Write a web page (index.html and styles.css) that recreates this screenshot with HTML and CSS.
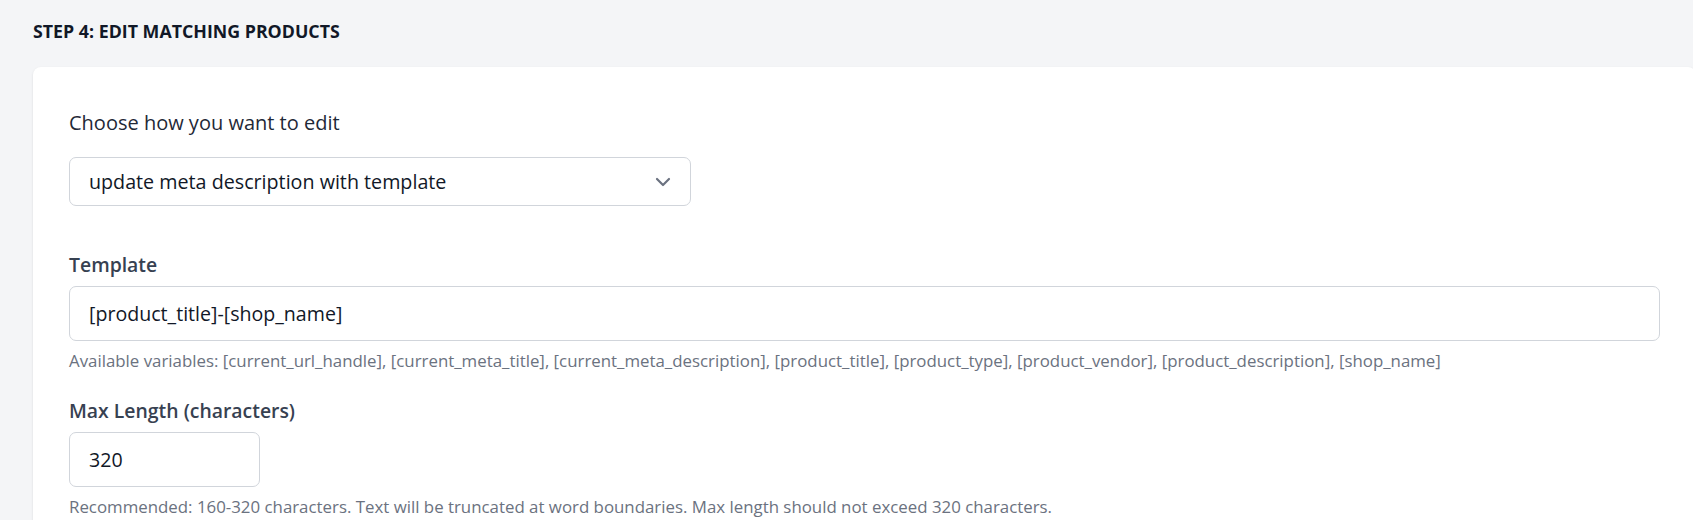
FILE: index.html
```html
<!DOCTYPE html>
<html lang="en">
<head>
  <meta charset="UTF-8">
  <meta name="viewport" content="width=device-width, initial-scale=1.0">
  <title>Edit matching products</title>
  <link rel="stylesheet" href="styles.css">
</head>
<body>

  <div class="page">
    <h2 class="step-title">Step 4: Edit matching products</h2>

    <div class="card">
      <p class="edit-label">Choose how you want to edit</p>

      <div class="select-wrap">
        <select class="select-input">
          <option>update meta description with template</option>
        </select>
        <svg class="select-arrow" width="16" height="10" viewBox="0 0 16 10" fill="none">
          <path d="M2 2l6 6 6-6" stroke="#6b7280" stroke-width="2.2" stroke-linecap="round" stroke-linejoin="round"/>
        </svg>
      </div>

      <div class="field field-template">
        <label class="field-label">Template</label>
        <input class="text-input" type="text" value="[product_title]-[shop_name]">
        <p class="field-help">Available variables: [current_url_handle], [current_meta_title], [current_meta_description], [product_title], [product_type], [product_vendor], [product_description], [shop_name]</p>
      </div>

      <div class="field">
        <label class="field-label">Max Length (characters)</label>
        <input class="text-input small" type="text" value="320">
        <p class="field-help">Recommended: 160-320 characters. Text will be truncated at word boundaries. Max length should not exceed 320 characters.</p>
      </div>
    </div>
  </div>

</body>
</html>
```

FILE: styles.css
```css
:root {
  --page-bg: #f4f5f7;
  --card-bg: #ffffff;
  --text-dark: #111827;
  --text: #1f2937;
  --label: #374151;
  --muted: #6b7280;
  --border: #d1d5db;
}

body {
  margin: 0;
  padding: 0;
  font-family: 'Open Sans', 'Noto Sans', sans-serif;
  background-color: var(--page-bg);
  color: var(--text);
  overflow: hidden;
}

.page {
  width: 1693px;
  padding: 16px 0 0 33px;
  box-sizing: border-box;
}

.step-title {
  margin: 0;
  font-size: 17.8px;
  line-height: 30px;
  font-weight: 700;
  text-transform: uppercase;
  color: var(--text-dark);
}

.card {
  margin-top: 21px;
  width: 1663px;
  background-color: var(--card-bg);
  border-radius: 8px;
  box-shadow: 0 1px 3px rgba(0, 0, 0, 0.08), 0 1px 2px rgba(0, 0, 0, 0.04);
  padding: 41px 36px 40px;
  box-sizing: border-box;
}

.edit-label {
  margin: 0 0 19px 0;
  font-size: 20px;
  line-height: 30px;
  color: var(--text);
}

.select-wrap {
  position: relative;
  width: 622px;
}

.select-input {
  -webkit-appearance: none;
  appearance: none;
  width: 100%;
  height: 49px;
  padding: 0 48px 0 19px;
  font-family: inherit;
  font-size: 19.7px;
  color: var(--text-dark);
  background-color: var(--card-bg);
  border: 1px solid var(--border);
  border-radius: 7px;
  outline: none;
}

.select-arrow {
  position: absolute;
  right: 20px;
  top: 20px;
  pointer-events: none;
}

.field {
  display: flex;
  flex-direction: column;
}

.field-template {
  margin-top: 45px;
}

.field-label {
  font-size: 19.4px;
  line-height: 28px;
  font-weight: 600;
  color: var(--label);
  margin-bottom: 7px;
}

.text-input {
  height: 55px;
  padding: 0 19px;
  font-family: inherit;
  font-size: 19.6px;
  color: var(--text-dark);
  background-color: var(--card-bg);
  border: 1px solid var(--border);
  border-radius: 7px;
  box-sizing: border-box;
  outline: none;
}

.text-input.small {
  width: 191px;
}

.field-help {
  margin: 8px 0 24px 0;
  font-size: 16.85px;
  line-height: 24px;
  color: var(--muted);
}
```
